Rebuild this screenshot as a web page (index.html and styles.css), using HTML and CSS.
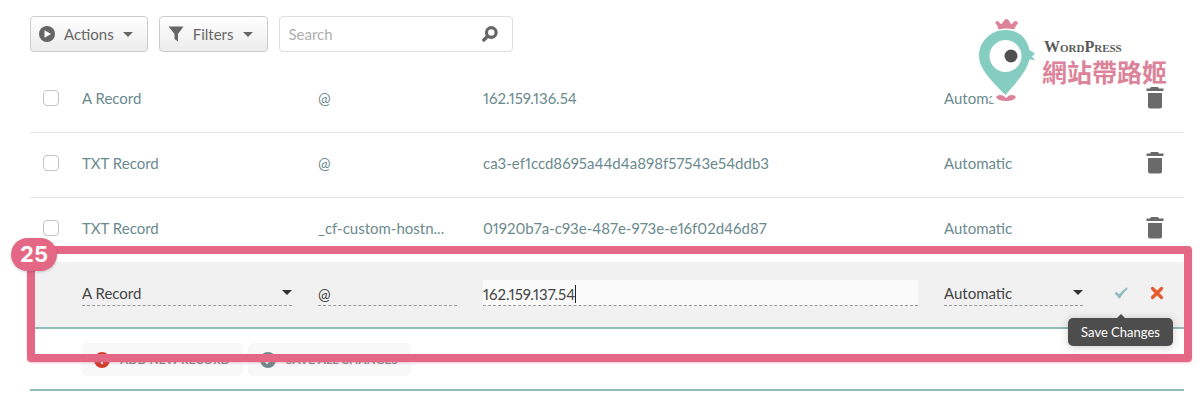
FILE: index.html
```html
<!DOCTYPE html>
<html lang="en">
<head>
<title>Host Records</title>
<meta charset="utf-8">
<meta name="viewport" content="width=device-width, initial-scale=1">
    <link rel="stylesheet" href="styles.css">
</head>
<body>
    <main class="panel">
        <div class="toolbar">
            <button type="button" class="tool-btn">
                <svg width="16" height="16" viewBox="0 0 16 16"><circle cx="8" cy="8" r="8" fill="#666"/><path d="M5.5 4.2v7.6L12 8z" fill="#fff"/></svg>
                Actions
                <span class="caret"></span>
            </button>
            <button type="button" class="tool-btn">
                <svg width="16" height="16" viewBox="0 0 16 16"><path d="M.5.5h15L10 8v7.5L6.500 13V8z" fill="#666"/></svg>
                Filters
                <span class="caret"></span>
            </button>
            <div class="search">
                <input type="text" placeholder="Search" aria-label="Search">
                <svg width="16" height="16" viewBox="0 0 16 16"><circle cx="9.300" cy="6.500" r="4.800" fill="none" stroke="#666" stroke-width="3.200"/><path d="M5.600 10.200L1.800 14" stroke="#666" stroke-width="3.400" stroke-linecap="round"/></svg>
            </div>
        </div>

        <table class="records">
            <colgroup>
                <col class="col-check">
                <col class="col-type">
                <col class="col-host">
                <col>
                <col class="col-ttl">
                <col class="col-actions">
            </colgroup>
            <tbody>
                <tr>
                    <td class="check"><input type="checkbox" aria-label="Select record"></td>
                    <td>A Record</td>
                    <td>@</td>
                    <td>162.159.136.54</td>
                    <td>Automatic</td>
                    <td class="actions">
                        <button type="button" class="icon-btn" aria-label="Delete">
                            <svg width="18" height="22" viewBox="0 0 18 22"><path d="M5 0h7l1 1.500h4.500v2.500H.5V1.500H4zM2 6h14v13.500q0 2-2 2H4q-2 0-2-2z" fill="#6a6a6a"/></svg>
                        </button>
                    </td>
                </tr>
                <tr>
                    <td class="check"><input type="checkbox" aria-label="Select record"></td>
                    <td>TXT Record</td>
                    <td>@</td>
                    <td>ca3-ef1ccd8695a44d4a898f57543e54ddb3</td>
                    <td>Automatic</td>
                    <td class="actions">
                        <button type="button" class="icon-btn" aria-label="Delete">
                            <svg width="18" height="22" viewBox="0 0 18 22"><path d="M5 0h7l1 1.500h4.500v2.500H.5V1.500H4zM2 6h14v13.500q0 2-2 2H4q-2 0-2-2z" fill="#6a6a6a"/></svg>
                        </button>
                    </td>
                </tr>
                <tr class="before-editing">
                    <td class="check"><input type="checkbox" aria-label="Select record"></td>
                    <td>TXT Record</td>
                    <td>_cf-custom-hostn...</td>
                    <td>01920b7a-c93e-487e-973e-e16f02d46d87</td>
                    <td>Automatic</td>
                    <td class="actions">
                        <button type="button" class="icon-btn" aria-label="Delete">
                            <svg width="18" height="22" viewBox="0 0 18 22"><path d="M5 0h7l1 1.500h4.500v2.500H.5V1.500H4zM2 6h14v13.500q0 2-2 2H4q-2 0-2-2z" fill="#6a6a6a"/></svg>
                        </button>
                    </td>
                </tr>
                <tr class="editing">
                    <td></td>
                    <td>
                        <div class="field">
                            <select aria-label="Type"><option>A Record</option><option>TXT Record</option></select>
                            <span class="caret dark"></span>
                        </div>
                    </td>
                    <td>
                        <div class="field text">
                            <input type="text" value="@" aria-label="Host">
                        </div>
                    </td>
                    <td>
                        <div class="field text active">
                            <input type="text" value="162.159.137.54" aria-label="Value">
                            <span class="cursor"></span>
                        </div>
                    </td>
                    <td>
                        <div class="field">
                            <select aria-label="TTL"><option>Automatic</option><option>30 min</option></select>
                            <span class="caret dark"></span>
                        </div>
                    </td>
                    <td class="actions">
                        <div class="edit-actions">
                            <div class="save">
                                <button type="button" class="icon-btn" aria-label="Save">
                                    <svg width="14" height="14" viewBox="0 0 14 14"><path d="M.5 7.500L2.500 5.800 5.200 8.300Q8.500 4 13 1.300L13.500 3Q9 6.500 6 12.200H4.800Q3 9.500.5 7.500z" fill="#8dbac0"/></svg>
                                </button>
                                <div class="tooltip" role="tooltip">Save Changes</div>
                            </div>
                            <button type="button" class="icon-btn" aria-label="Cancel">
                                <svg width="14" height="14" viewBox="0 0 14 14"><path d="M2.500 2.500l9 9M11.500 2.500l-9 9" stroke="#e85a2c" stroke-width="3.200" stroke-linecap="round"/></svg>
                            </button>
                        </div>
                    </td>
                </tr>
            </tbody>
        </table>

        <div class="record-buttons">
            <button type="button" class="record-btn">
                <svg width="16" height="16" viewBox="0 0 16 16"><circle cx="8" cy="8" r="8" fill="#cf3f2e"/><path d="M8 4v8M4 8h8" stroke="#fff" stroke-width="2"/></svg>
                ADD NEW RECORD
            </button>
            <button type="button" class="record-btn">
                <svg width="16" height="16" viewBox="0 0 16 16"><circle cx="8" cy="8" r="8" fill="#6d8b8f"/><path d="M4.500 8.200l2.500 2.500 4.500-5" fill="none" stroke="#fff" stroke-width="2"/></svg>
                SAVE ALL CHANGES
            </button>
        </div>

        <!-- step marker -->
        <div class="step-frame"><span class="step-number">25</span></div>

        <div class="brand">
            <svg width="60" height="86" viewBox="0 0 60 86">
                <path d="M16 76Q29 84 44 76" fill="none" stroke="#fff" stroke-width="14"/>
                <path d="M19 2.500q2-1.500 4 2l1.500.5 3-4q2-2 4 0l2.500 4 1.500-.5q2-3.500 4.500-2 2 2-.5 3.500L37 10.500Q29 8.500 21.500 10.500L20 6q-2.500-1.500-1-3.500z" fill="#dc8399"/>
                <path d="M28.500 11C43 11 50 20 52.500 31L58 34.500 55 37.500 58 41 52.500 40.500C49 54 37 66 28.500 76 17 64 2 51 2 37 2 22 14 11 28.500 11z" fill="#85cdc1"/>
                <circle cx="28.500" cy="37" r="16" fill="#fff"/>
                <circle cx="34" cy="37" r="6.500" fill="#505050"/>
                <path d="M19 78q2-3 7-1.500L29 79l3-2.500q5-1.500 7 1.500-2 4-10 4t-10-4z" fill="#dc8399"/>
            </svg>
            <div class="brand-text">
                <span class="brand-en">WordPress</span>
                <span class="brand-zh" lang="zh-Hant">網站帶路姬</span>
            </div>
        </div>
    </main>
</body>
</html>
```

FILE: styles.css
```css
* {
    box-sizing: border-box;
}
body {
    font-family: Lato, "Noto Sans CJK TC", sans-serif;
    font-size: 15px;
    font-variant-numeric: proportional-nums;
    line-height: 20px;
    margin: 0;
    padding: 16px 16px 0 30px;
    background-color: #fff;
    color: #6b8a8e;
}
button, input, select {
    font: inherit;
    color: inherit;
    margin: 0;
}
svg {
    display: block;
    flex: none;
}
.panel {
    position: relative;
    border-bottom: 2px solid #8fbcb8;
}
.toolbar {
    display: flex;
    gap: 11px;
    margin-bottom: 16px;
}
.tool-btn {
    display: flex;
    align-items: center;
    gap: 9px;
    height: 36px;
    padding: 0 14px 0 8px;
    border: 1px solid #ccc;
    border-radius: 4px;
    background: linear-gradient(#fff, #ececec);
    color: #666;
    cursor: pointer;
}
.caret {
    border: 5px solid transparent;
    border-top-color: #666;
    border-bottom: 0;
}
.search {
    display: flex;
    align-items: center;
    width: 234px;
    height: 36px;
    padding: 0 14px 0 9px;
    border: 1px solid #ddd;
    border-radius: 4px;
}
.search input {
    flex: 1;
    min-width: 0;
    padding: 0;
    border: 0;
    outline: none;
    background: none;
    color: #666;
}
.search input::placeholder {
    color: #b0b0b0;
}
.records {
    width: 100%;
    table-layout: fixed;
    border-collapse: separate;
    border-spacing: 0;
}
.col-check {
    width: 52px;
}
.col-type {
    width: 236px;
}
.col-host, .col-ttl {
    width: 165px;
}
.col-actions {
    width: 75px;
}
.records td {
    height: 65px;
    padding: 0 26px 4px 0;
    border-bottom: 1px solid #e4e4e4;
    white-space: nowrap;
}
.records .check {
    padding: 0 0 4px 13px;
}
.check input {
    display: block;
    appearance: none;
    width: 16px;
    height: 16px;
    border: 1px solid #c4c4c4;
    border-radius: 4px;
    background-color: #fff;
}
.records .actions {
    padding: 0 20px 4px 0;
}
.icon-btn {
    display: block;
    margin-left: auto;
    padding: 0;
    border: 0;
    background: none;
    cursor: pointer;
}
.records .before-editing td {
    border-bottom-color: #f1f1f1;
}
.records .editing td {
    height: 66px;
    background-color: #f1f1f1;
    border-bottom: 2px solid #8fbcb8;
    color: #444;
}
.field {
    display: flex;
    align-items: center;
    position: relative;
    height: 26px;
    border-bottom: 1px dashed #999;
}
.field select {
    width: 100%;
    padding: 0;
    border: 0;
    outline: none;
    appearance: none;
    background: none;
}
.field .caret {
    position: absolute;
    right: 0;
    pointer-events: none;
}
.caret.dark {
    border-top-color: #333;
}
.field input {
    width: 100%;
    padding: 0;
    border: 0;
    outline: none;
    background: none;
}
.field.text {
    padding-top: 2px;
}
.field.active {
    background-color: #fafafa;
}
.field.active input {
    width: auto;
    field-sizing: content;
}
.cursor {
    width: 1px;
    height: 18px;
    background-color: #222;
}
.edit-actions {
    display: flex;
    justify-content: flex-end;
    gap: 22px;
}
.edit-actions .icon-btn {
    margin: 0;
}
.save {
    position: relative;
}
.tooltip {
    position: absolute;
    top: 32px;
    left: 50%;
    z-index: 2;
    width: 105px;
    margin-left: -53px;
    padding: 4px 0;
    border-radius: 5px;
    background-color: #4d4d4d;
    box-shadow: 0 1px 8px rgba(0, 0, 0, 0.2);
    color: #fff;
    font-size: 13px;
    text-align: center;
}
.tooltip::before {
    content: "";
    position: absolute;
    top: -4px;
    left: 50%;
    margin-left: -5px;
    border: 5px solid transparent;
    border-bottom-color: #4d4d4d;
    border-top: 0;
}
.record-buttons {
    display: flex;
    gap: 5px;
    padding: 14px 0 13px 52px;
}
.record-btn {
    display: flex;
    align-items: center;
    gap: 10px;
    height: 33px;
    padding: 0 13px 0 12px;
    border: 0;
    border-radius: 5px;
    background-color: #f8f8f8;
    color: #8a8a8a;
    font-size: 12px;
    font-weight: bold;
    cursor: pointer;
}
.step-frame {
    position: absolute;
    left: -3px;
    right: -8px;
    bottom: 27px;
    height: 116px;
    border: 8px solid #e46886;
    border-radius: 4px;
    box-shadow: 0 1px 2px rgba(228, 104, 134, 0.4);
    pointer-events: none;
}
.step-number {
    position: absolute;
    top: -16px;
    left: -24px;
    width: 46px;
    border-radius: 17px;
    background-color: #e46886;
    box-shadow: 0 1px 3px rgba(0, 0, 0, 0.2);
    color: #fff;
    font-family: Inter, sans-serif;
    font-size: 22px;
    font-weight: bold;
    line-height: 33px;
    text-align: center;
}
.brand {
    position: absolute;
    top: 3px;
    right: 17px;
    display: flex;
    gap: 5px;
    pointer-events: none;
}
.brand-text {
    display: flex;
    flex-direction: column;
    padding-top: 18px;
}
.brand-en {
    padding-left: 2px;
    color: #5a5a5a;
    font-family: "Liberation Serif", serif;
    font-size: 16px;
    font-variant: small-caps;
    font-weight: bold;
}
.brand-zh {
    color: #dc8399;
    font-family: "Noto Sans CJK TC", sans-serif;
    font-size: 25px;
    font-weight: bold;
    line-height: 28px;
}
```
